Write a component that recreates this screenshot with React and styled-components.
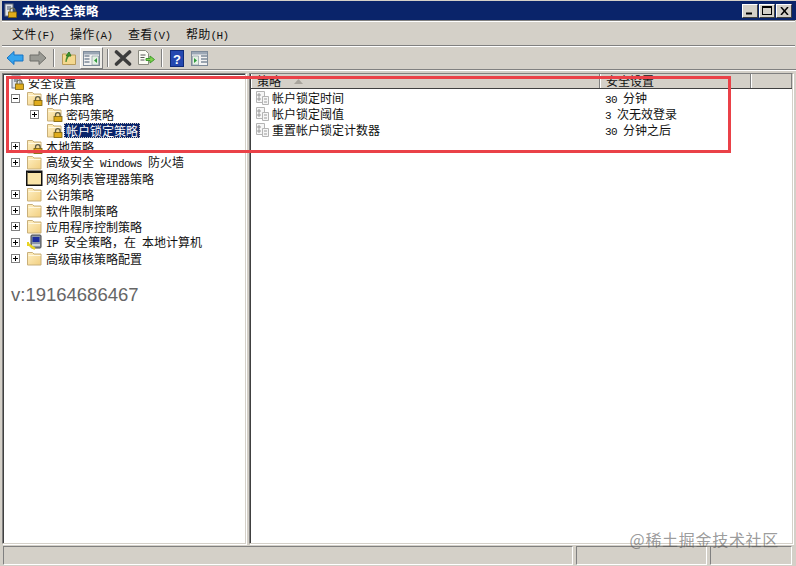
import React from 'react';
import styled, { createGlobalStyle } from 'styled-components';

const Global = createGlobalStyle`
  html, body { margin: 0; padding: 0; background: #d4d0c8; overflow: hidden; }
  * { box-sizing: border-box; }
`;
const CJK = `"Noto Sans CJK SC", "Liberation Sans", sans-serif`;

const Windowed = styled.div`
  position: relative; width: 796px; height: 566px; background: #d4d0c8;
  display: flex; flex-direction: column; font-family: ${CJK}; font-size: 12px; color: #111; overflow: hidden;
`;
const TitleBar = styled.div`
  height: 19px; margin: 1px 0 0 2px; background: #0a246a; display: flex; align-items: center;
  padding: 0 4px 0 2px; gap: 3px; color: #fff; font-weight: 700; font-size: 12.5px; flex: none;
`;
const TitleText = styled.span`flex: 1; letter-spacing: .3px; line-height: 19px;`;
const WinButtons = styled.div`display: flex; align-items: center; gap: 1px;`;
const WinButton = styled.div`
  width: 16px; height: 14px; background: #d4d0c8;
  border: 1px solid; border-color: #fff #404040 #404040 #fff; display: flex; align-items: center; justify-content: center;
`;
const MenuBar = styled.div`
  height: 25px; flex: none; margin: 1px 1px 0 2px; border-top: 1px solid #fff; border-bottom: 1px solid #808080; box-shadow: 0 1px 0 #fff, 0 -1px 0 #808080;
  display: flex; align-items: center; padding-left: 10px; gap: 16px;
`;
const MenuItem = styled.span`width: 42px; white-space: nowrap; font-size: 12px; letter-spacing: .2px;`;
const Toolbar = styled.div`
  height: 23px; flex: none; margin-top: 1px; display: flex; align-items: center; padding-left: 3px; border-bottom: 1px solid #808080; box-shadow: 0 1px 0 #fff;
`;
const ToolButton = styled.div`
  width: 23px; height: 22px; flex: none; display: flex; align-items: center; justify-content: center;
  ${p => p.$on && `background: #eeece7; border: 1px solid; border-color: #fff #808080 #808080 #fff;`}
`;
const Sep = styled.div`width: 2px; height: 18px; flex: none; margin: 0 2px 0 4px; border-left: 1px solid #808080; border-right: 1px solid #fff;`;
const Panes = styled.div`flex: 1; min-height: 0; display: flex; padding: 3px 3px 2px 2px; gap: 3px;`;
const Pane = styled.div`
  background: #fff; border: 1px solid; border-color: #808080 #d4d0c8 #d4d0c8 #808080;
  box-shadow: inset 1px 1px 0 #404040, 1px 1px 0 #fff;
  width: ${p => p.$w ? `${p.$w}px` : 'auto'}; flex: ${p => p.$w ? 'none' : 1}; min-width: 0; position: relative; display: flex; flex-direction: column;
`;
const Tree = styled.div`padding: 0 0 0 2px;`;
const Row = styled.div`
  height: 16px; display: flex; align-items: center; white-space: nowrap; padding-left: ${p => p.$indent || 0}px;
`;
const ExpSlot = styled.div`width: 17px; height: 16px; flex: none; display: flex; align-items: center; justify-content: center;`;
const Box = styled.div`
  width: 9px; height: 9px; border: 1px solid #808080; background: #fff; position: relative;
  &::before { content: ''; position: absolute; left: 1px; top: 3px; width: 5px; height: 1px; background: #000; }
  ${p => p.$plus && `&::after { content: ''; position: absolute; left: 3px; top: 1px; width: 1px; height: 5px; background: #000; }`}
`;
const IconSlot = styled.div`width: ${p => p.$w}px; height: 16px; flex: none; display: flex; align-items: center; justify-content: center;`;
const Label = styled.span`
  line-height: 15px; padding: 0 1px; margin-left: ${p => p.$ml || 0}px;
  ${p => p.$sel && `background: #0a246a; color: #fff; outline: 1px dotted #d4d0c8; outline-offset: -1px; margin-left: -1px; padding: 0 2px;`}
`;
const Latin = styled.span`font-family: "Liberation Mono", monospace; font-size: 11px; letter-spacing: -.6px; line-height: 1; white-space: pre;`;
const Note = styled.div`
  margin: 18px 0 0 8px; font-family: "Liberation Sans", sans-serif; font-size: 18.5px; color: #666; line-height: 22px;
`;
const Header = styled.div`
  height: 15px; flex: none; display: flex; background: #d4d0c8; border-bottom: 1px solid #404040; margin-left: 1px;
`;
const HeadCell = styled.div`
  width: ${p => p.$w ? `${p.$w}px` : 'auto'}; flex: ${p => p.$w ? 'none' : 1}; padding-left: 5px; display: flex; align-items: center; gap: 13px;
  border-left: 1px solid #fff; border-right: 1px solid #808080; font-size: 12px; line-height: 14px;
`;
const ListRow = styled.div`display: flex; height: 16px; align-items: center;`;
const NameCell = styled.div`width: 349px; flex: none; padding-left: 5px; display: flex; align-items: center; gap: 2px;`;
const ValueCell = styled.div`padding-left: 6px; white-space: pre;`;
const Status = styled.div`height: 20px; flex: none; display: flex; gap: 3px; padding: 0 4px 1px 3px;`;
const StatusPane = styled.div`
  width: ${p => p.$w}px; flex: none; border: 1px solid; border-color: #808080 #fff #fff #808080;
`;
const Highlight = styled.div`
  position: absolute; left: 6px; top: 76px; width: 725px; height: 77px; border: 3px solid #ea4148; pointer-events: none;
`;
const Mark = styled.div`
  position: absolute; right: 17px; top: 528px; font-size: 16px; line-height: 22px; color: rgba(90,90,90,.62); white-space: nowrap; letter-spacing: .7px;
`;

const mixed = s => s.split(/([A-Za-z0-9() ]+)/).map((part, i) => (i % 2 ? <Latin key={i}>{part}</Latin> : part));

const Folder = ({ lock }) => (
  <svg width="17" height="16" viewBox="0 0 17 16">
    <defs>
      <linearGradient id="fg" x1="0" y1="0" x2="1" y2="1">
        <stop offset="0" stopColor="#fff0c4" />
        <stop offset="1" stopColor="#f2cf80" />
      </linearGradient>
    </defs>
    <path d="M1.500 2.500h5l1.500 1.500h7v11h-13.500z" fill="url(#fg)" stroke="#c9b07a" />
    <path d="M2.500 5.500h12" stroke="#fff8e0" />
    {lock && <g>
      <path d="M9.500 11V9a2.300 2.300 0 0 1 4.600 0v2" fill="none" stroke="#5c5c48" strokeWidth="1.300" />
      <rect x="8" y="10.500" width="8" height="5" fill="#e0ac1c" stroke="#7a600c" strokeWidth=".8" />
    </g>}
  </svg>
);
const RootIcon = () => (
  <svg width="15" height="15" viewBox="0 0 15 15">
    <rect x="1" y="1" width="8" height="12" fill="#dfe3ea" stroke="#6b7280" />
    <path d="M3 4h4M3 6h4" stroke="#4a5568" />
    <path d="M6 9V7.500a2.500 2.500 0 0 1 5 0V9" fill="none" stroke="#6b6b55" strokeWidth="1.200" />
    <rect x="4.500" y="9" width="8" height="5.500" fill="#e0ac1c" stroke="#7a600c" strokeWidth=".8" />
  </svg>
);
const ListFolder = () => (
  <svg width="17" height="16" viewBox="0 0 17 16">
    <rect x=".75" y="1.250" width="15" height="14" fill="#f9e4a8" stroke="#111" strokeWidth="1.500" />
    <path d="M1.500 2.500h14" stroke="#111" />
  </svg>
);
const IpIcon = () => (
  <svg width="16" height="17" viewBox="0 0 16 17">
    <rect x="4" y="1" width="10" height="13" rx="1" fill="#8c97a8" stroke="#444" />
    <rect x="5.500" y="3" width="7" height="5" fill="#1f2f9e" />
    <rect x="5" y="10" width="8" height="2" fill="#cfd4dc" />
    <path d="M1 10l7 5" stroke="#e8d324" strokeWidth="2.400" />
    <path d="M1 8v4" stroke="#e8d324" strokeWidth="2" />
  </svg>
);
const PolicyIcon = () => (
  <svg width="15" height="15" viewBox="0 0 15 15" fill="none" stroke="#b4b4b4">
    <path d="M1.500 1.500h8v11h-8z" fill="#f6f6f6" />
    <path d="M3 4h2v2H3zM3 8h2v2H3z" stroke="#9a9a9a" />
    <path d="M7.500 6.500h6v8h-6z" fill="#f6f6f6" />
    <path d="M9 9h3M9 12h3" stroke="#9a9a9a" />
  </svg>
);
const Arrow = ({ dir, color, stroke }) => (
  <svg width="18" height="16" viewBox="0 0 18 16" style={dir === 'r' ? { transform: 'scaleX(-1)' } : undefined}>
    <path d="M1 8l7-6.500V5h9v6H8v3.500z" fill={color} stroke={stroke} />
  </svg>
);
const UpIcon = () => (
  <svg width="16" height="16" viewBox="0 0 16 16">
    <path d="M1.500 4h4l1 1h8v9.500h-13z" fill="#f4d88e" stroke="#b89a58" />
    <path d="M5 12c0-4 1-6 3-6M8 2L5 6h5z" fill="#3f9a2f" stroke="#2f7a22" />
  </svg>
);
const PaneIcon = ({ flip }) => (
  <svg width="17" height="15" viewBox="0 0 17 15">
    <rect x=".5" y=".5" width="16" height="14" fill="#f2f2f2" stroke="#7d8a99" />
    <rect x="1" y="1" width="15" height="2.500" fill="#9ba7b5" />
    {flip ? <>
      <path d="M1.500 5h6v9h-6z" fill="#e3f1e3" stroke="#7d8a99" strokeWidth=".6" />
      <path d="M3 7l3 2.500L3 12z" fill="#2f9a3a" />
      <path d="M10 5h6M10 8h6M10 11h6" stroke="#7d8a99" strokeWidth="1.400" />
    </> : <>
      <path d="M1.500 5h5M1.500 8h5M1.500 11h5" stroke="#7d8a99" strokeWidth="1.400" />
      <path d="M9 5h6.500v9H9z" fill="#e3f1e3" stroke="#7d8a99" strokeWidth=".6" />
      <path d="M14 7l-3 2.500 3 2.500z" fill="#2f9a3a" />
    </>}
  </svg>
);
const DeleteIcon = () => (
  <svg width="18" height="16" viewBox="0 0 18 16">
    <path d="M2.500 2l13 12M15.500 2l-13 12" stroke="#3c3c3c" strokeWidth="3.600" strokeLinecap="round" />
  </svg>
);
const ExportIcon = () => (
  <svg width="18" height="18" viewBox="0 0 18 18">
    <path d="M1.500 1.500h7l3 3v11h-10z" fill="#fbfbf4" stroke="#8a8a80" />
    <path d="M3.500 6h5M3.500 8.500h4M3.500 11h4" stroke="#555" />
    <path d="M9 9.500h4V7l4.500 3.500L13 14v-2.500H9z" fill="#7fd14d" stroke="#3f9a2f" />
  </svg>
);
const HelpIcon = () => (
  <svg width="14" height="17" viewBox="0 0 14 17">
    <rect x=".5" y=".5" width="13" height="16" fill="#2448b0" stroke="#0f2a78" />
    <text x="7" y="13.500" textAnchor="middle" fill="#fff" fontFamily="Liberation Sans" fontWeight="700" fontSize="13">?</text>
  </svg>
);

const treeRows = [
  { label: '帐户策略', exp: 'minus', lock: true },
  { label: '密码策略', exp: 'plus', lock: true, level: 1 },
  { label: '帐户锁定策略', lock: true, level: 1, sel: true },
  { label: '本地策略', exp: 'plus', lock: true },
  { label: '高级安全 Windows 防火墙', exp: 'plus' },
  { label: '网络列表管理器策略', icon: 'list' },
  { label: '公钥策略', exp: 'plus' },
  { label: '软件限制策略', exp: 'plus' },
  { label: '应用程序控制策略', exp: 'plus' },
  { label: 'IP 安全策略，在 本地计算机', exp: 'plus', icon: 'ip' },
  { label: '高级审核策略配置', exp: 'plus' },
];
const listRows = [
  ['帐户锁定时间', '30 分钟'],
  ['帐户锁定阈值', '3 次无效登录'],
  ['重置帐户锁定计数器', '30 分钟之后'],
];

export default function App() {
  return (
    <Windowed>
      <Global />
      <TitleBar>
        <RootIcon />
        <TitleText>本地安全策略</TitleText>
        <WinButtons>
          <WinButton><svg width="8" height="8"><path d="M0 6.500h6" stroke="#000" strokeWidth="2" /></svg></WinButton>
          <WinButton><svg width="10" height="9"><rect x=".5" y="1" width="9" height="7.500" fill="none" stroke="#000" /><path d="M0 1h10" stroke="#000" strokeWidth="2" /></svg></WinButton>
          <WinButton><svg width="9" height="8"><path d="M1 0l7 8M8 0L1 8" stroke="#000" strokeWidth="1.500" /></svg></WinButton>
        </WinButtons>
      </TitleBar>
      <MenuBar>
        <MenuItem>{mixed('文件(F)')}</MenuItem>
        <MenuItem>{mixed('操作(A)')}</MenuItem>
        <MenuItem>{mixed('查看(V)')}</MenuItem>
        <MenuItem>{mixed('帮助(H)')}</MenuItem>
      </MenuBar>
      <Toolbar>
        <ToolButton><Arrow color="#35a4ee" stroke="#1673c4" /></ToolButton>
        <ToolButton><Arrow dir="r" color="#9a9a94" stroke="#6f6f6a" /></ToolButton>
        <Sep />
        <ToolButton><UpIcon /></ToolButton>
        <ToolButton $on><PaneIcon /></ToolButton>
        <Sep />
        <ToolButton><DeleteIcon /></ToolButton>
        <ToolButton><ExportIcon /></ToolButton>
        <Sep />
        <ToolButton><HelpIcon /></ToolButton>
        <ToolButton><PaneIcon flip /></ToolButton>
      </Toolbar>
      <Panes>
        <Pane $w={244}>
          <Tree>
            <Row $indent={6}><RootIcon /><Label $ml={1}>安全设置</Label></Row>
            {treeRows.map(r => (
              <Row key={r.label} $indent={r.level ? 21 : 2}>
                <ExpSlot>{r.exp && <Box $plus={r.exp === 'plus'} />}</ExpSlot>
                <IconSlot $w={r.level ? 22 : 21}>
                  {r.icon === 'list' ? <ListFolder /> : r.icon === 'ip' ? <IpIcon /> : <Folder lock={r.lock} />}
                </IconSlot>
                <Label $sel={r.sel}>{mixed(r.label)}</Label>
              </Row>
            ))}
          </Tree>
          <Note>v:19164686467</Note>
        </Pane>
        <Pane>
          <Header>
            <HeadCell $w={349}>策略<svg width="9" height="5"><path d="M0 5l4.500-5L9 5z" fill="#a8a49c" /></svg></HeadCell>
            <HeadCell $w={151}>安全设置</HeadCell>
            <HeadCell />
          </Header>
          <div>
            {listRows.map(([n, v]) => (
              <ListRow key={n}>
                <NameCell><PolicyIcon /><span>{n}</span></NameCell>
                <ValueCell>{mixed(v)}</ValueCell>
              </ListRow>
            ))}
          </div>
        </Pane>
      </Panes>
      <Status>
        <StatusPane $w={570} />
        <StatusPane $w={131} />
        <StatusPane $w={82} />
      </Status>
      <Highlight />
      <Mark>@稀土掘金技术社区</Mark>
    </Windowed>
  );
}
